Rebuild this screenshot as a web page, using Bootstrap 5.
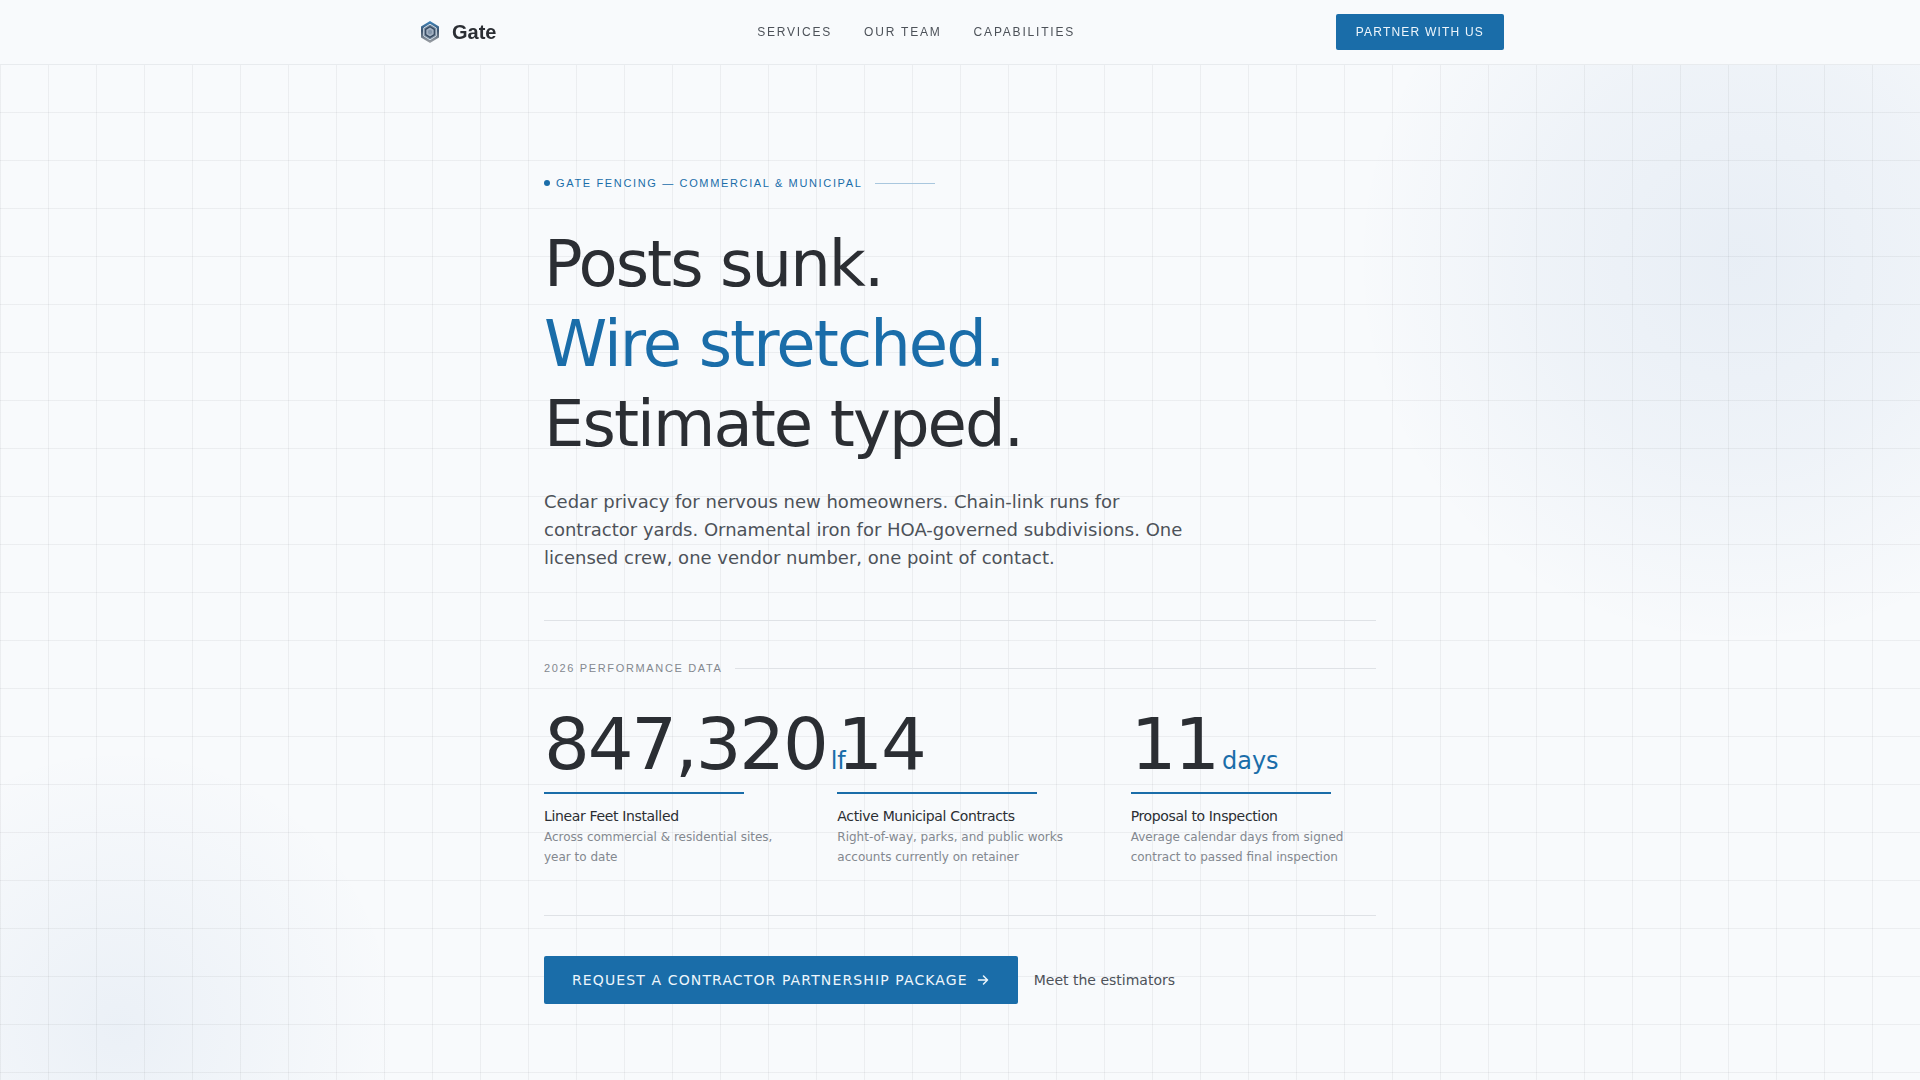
<!DOCTYPE html>
<html lang="en">
<head>
<meta charset="utf-8">
<meta name="viewport" content="width=device-width, initial-scale=1">
<title>Gate Fencing</title>
<link href="https://cdn.jsdelivr.net/npm/bootstrap@5.3.0/dist/css/bootstrap.min.css" rel="stylesheet">
<style>
  :root {
    --ink: #2b2e33;
    --ink-soft: #4d5259;
    --ink-mute: #83888f;
    --blue: #1a6da9;
    --paper: #f8fafc;
    --rule: #dfe2e6;
  }
  body { background: var(--paper); color: var(--ink); font-family: "DejaVu Sans", sans-serif; padding-top: 64px; }
  .ui-sans { font-family: "Liberation Sans", sans-serif; }
  .site-header { background: rgba(248, 250, 252, .95); border-bottom: 1px solid #e8ebee; height: 65px; padding: 0; }
  .header-inner { max-width: 1088px; }
  .brand-name { font-size: 20px; font-weight: 700; line-height: 24px; color: var(--ink); }
  .site-links { gap: 32px; }
  .site-links a { font-size: 12px; line-height: 20px; letter-spacing: .15em; color: var(--ink-soft); text-decoration: none; }
  .btn-gate { --bs-btn-bg: var(--blue); --bs-btn-color: #eef6fc; --bs-btn-hover-bg: #155a8c; --bs-btn-hover-color: #fff; --bs-btn-active-bg: #155a8c; --bs-btn-active-color: #fff;
    --bs-btn-border-width: 0; --bs-btn-border-radius: 2px; }
  .btn-partner { --bs-btn-font-size: 12px; --bs-btn-line-height: 20px; --bs-btn-padding-x: 20px; --bs-btn-padding-y: 8px; letter-spacing: .1em; }
  .hero-area { min-height: calc(100vh - 64px); padding-top: 112px; padding-bottom: 76px;
    background-image:
      linear-gradient(to right, rgba(43, 46, 51, .06) 1px, transparent 1px),
      linear-gradient(to bottom, rgba(43, 46, 51, .06) 1px, transparent 1px),
      radial-gradient(circle at calc(100% - 180px) 196px, rgba(26, 84, 160, .07), rgba(26, 84, 160, .045) 200px, transparent 385px),
      radial-gradient(circle at 120px calc(100% - 54px), rgba(26, 84, 160, .06), transparent 280px);
    background-size: 48px 48px, 48px 48px, 100% 100%, 100% 100%; }
  .hero-inner { max-width: 832px; }
  .eyebrow { font-size: 11px; line-height: 14px; letter-spacing: .15em; color: var(--blue); margin-bottom: 34px; }
  .eyebrow-dot { width: 6px; height: 6px; border-radius: 50%; background: var(--blue); margin-right: 6px; }
  .eyebrow-line { width: 60px; height: 1px; background: #a9c7de; margin-left: 12px; }
  .headline { font-size: 64px; line-height: 80px; font-weight: 400; letter-spacing: -.03em; color: var(--ink); margin-bottom: 24px; }
  .headline em { font-style: normal; color: var(--blue); }
  .intro { font-size: 18px; line-height: 28px; color: var(--ink-soft); max-width: 640px; margin-bottom: 48px; }
  .stats { border-top: 1px solid var(--rule); border-bottom: 1px solid var(--rule); padding: 40px 0 48px; margin-bottom: 40px; }
  .stats-title { font-size: 11px; line-height: 15px; font-weight: 400; letter-spacing: .15em; color: var(--ink-mute); gap: 12px; margin-bottom: 32px; }
  .stats-title::after { content: ""; flex: 1; height: 1px; background: var(--rule); }
  .figure-num { font-size: 72px; line-height: 72px; letter-spacing: -.03em; white-space: nowrap; }
  .figure-unit { font-size: 24px; line-height: 24px; letter-spacing: 0; color: var(--blue); margin-left: 4px; }
  .figure-bar { width: 200px; height: 2px; background: var(--blue); margin: 12px 0; }
  .figure-name { font-size: 14px; line-height: 21px; font-weight: 400; letter-spacing: -.025em; }
  .figure-note { font-size: 12px; line-height: 20px; color: var(--ink-mute); }
  .btn-request { --bs-btn-font-size: 14px; --bs-btn-line-height: 24px; --bs-btn-padding-x: 28px; --bs-btn-padding-y: 12px; letter-spacing: .08em; }
  .meet-link { font-size: 14px; line-height: 24px; color: var(--ink-soft); text-decoration: none; }
</style>
</head>
<body>
<header class="navbar site-header fixed-top ui-sans">
  <div class="header-inner container-fluid p-0 d-flex flex-nowrap align-items-center justify-content-between">
    <a class="d-flex align-items-center gap-2 text-decoration-none" href="#">
      <svg width="28" height="28" viewBox="0 0 28 28" aria-hidden="true">
        <defs>
          <linearGradient id="steel" x1="0" y1="0" x2="0" y2="1">
            <stop offset="0" stop-color="#3d85bd"/><stop offset=".45" stop-color="#40566f"/><stop offset="1" stop-color="#a0a3a7"/>
          </linearGradient>
        </defs>
        <path d="M14 3l9 5.500v11L14 25l-9-5.500v-11z" fill="url(#steel)"/>
        <path d="M14 6.200l6.300 3.900v7.800L14 21.800l-6.300-3.900v-7.800z" fill="#6f8297" stroke="#cfdbe6" stroke-width="1"/>
        <path d="M14 8.800l4.300 2.600v5.200L14 19.200l-4.300-2.600v-5.200z" fill="#a3b1c2" stroke="#34485f" stroke-width="1.200"/>
        <path d="M14 11.500l2 1.200v2.600l-2 1.200-2-1.200v-2.600z" fill="#8496ab"/>
      </svg>
      <span class="brand-name">Gate</span>
    </a>
    <nav class="site-links d-flex" aria-label="Main">
      <a href="#services">SERVICES</a>
      <a href="#team">OUR TEAM</a>
      <a href="#capabilities">CAPABILITIES</a>
    </nav>
    <button type="button" class="btn btn-gate btn-partner">PARTNER WITH US</button>
  </div>
</header>

<main class="hero-area">
  <div class="hero-inner container-fluid p-0">
    <div class="eyebrow ui-sans d-flex align-items-center">
      <span class="eyebrow-dot"></span>
      <span>GATE FENCING — COMMERCIAL &amp; MUNICIPAL</span>
      <span class="eyebrow-line"></span>
    </div>
    <h1 class="headline">Posts sunk.<br><em>Wire stretched.</em><br>Estimate typed.</h1>
    <p class="intro">Cedar privacy for nervous new homeowners. Chain-link runs for contractor yards. Ornamental iron for HOA-governed subdivisions. One licensed crew, one vendor number, one point of contact.</p>

    <section class="stats">
      <h2 class="stats-title ui-sans d-flex align-items-center">2026 PERFORMANCE DATA</h2>
      <div class="row row-cols-3 gx-5">
        <div class="col">
          <div class="figure-num">847,320<span class="figure-unit">lf</span></div>
          <div class="figure-bar"></div>
          <h3 class="figure-name m-0">Linear Feet Installed</h3>
          <p class="figure-note m-0">Across commercial &amp; residential sites, year to date</p>
        </div>
        <div class="col">
          <div class="figure-num">14</div>
          <div class="figure-bar"></div>
          <h3 class="figure-name m-0">Active Municipal Contracts</h3>
          <p class="figure-note m-0">Right-of-way, parks, and public works accounts currently on retainer</p>
        </div>
        <div class="col">
          <div class="figure-num">11<span class="figure-unit">days</span></div>
          <div class="figure-bar"></div>
          <h3 class="figure-name m-0">Proposal to Inspection</h3>
          <p class="figure-note m-0">Average calendar days from signed contract to passed final inspection</p>
        </div>
      </div>
    </section>

    <div class="d-flex align-items-center gap-3">
      <button type="button" class="btn btn-gate btn-request d-flex align-items-center gap-2">
        REQUEST A CONTRACTOR PARTNERSHIP PACKAGE
        <svg width="14" height="14" viewBox="0 0 14 14" fill="none" stroke="currentColor" stroke-width="1.500" stroke-linecap="round" stroke-linejoin="round" aria-hidden="true"><path d="M2.500 7h9M7.500 3l4 4-4 4"/></svg>
      </button>
      <a class="meet-link" href="#team">Meet the estimators</a>
    </div>
  </div>
</main>
<script src="https://cdn.jsdelivr.net/npm/bootstrap@5.3.0/dist/js/bootstrap.bundle.min.js"></script>
</body>
</html>
